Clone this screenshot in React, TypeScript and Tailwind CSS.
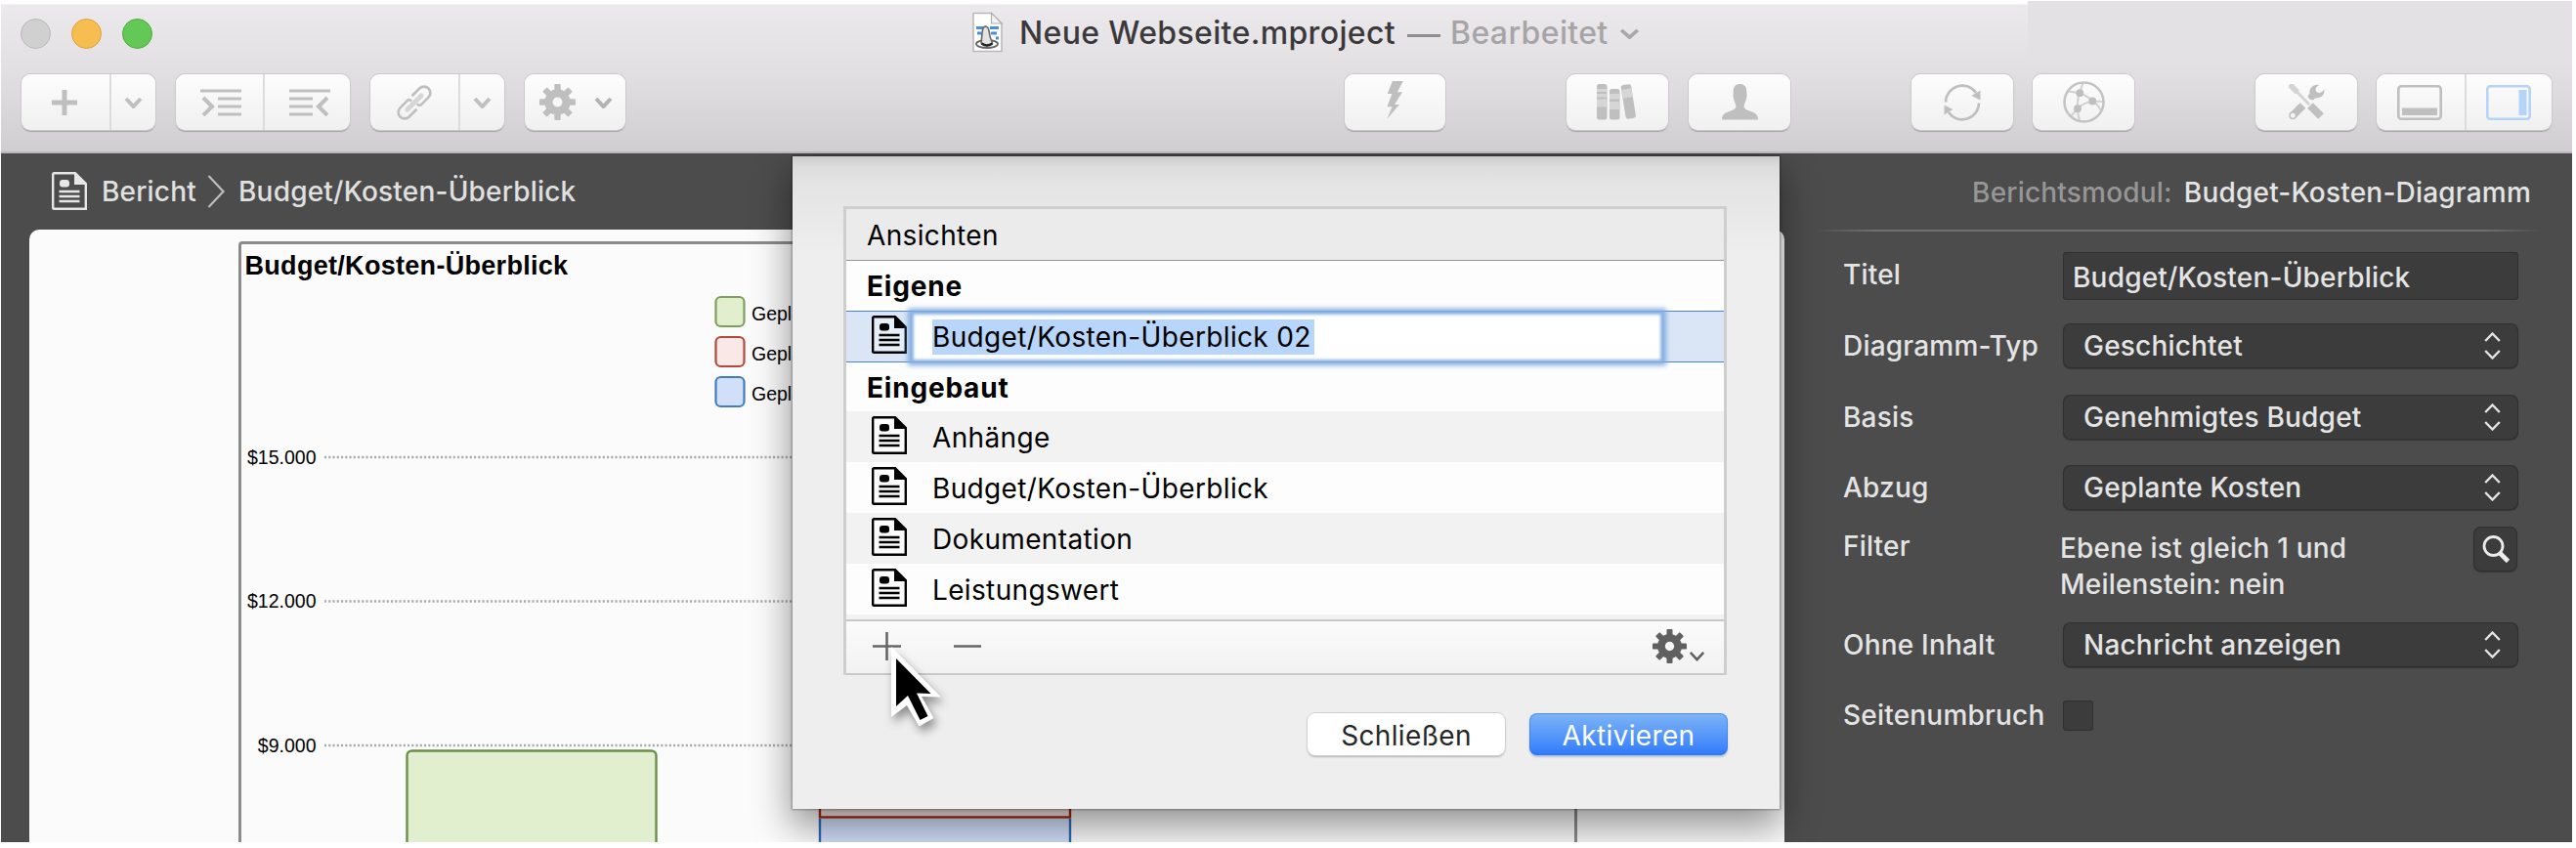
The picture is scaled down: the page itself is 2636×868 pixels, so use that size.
import { ReactNode } from "react";

const VIEWS = ["Anhänge", "Budget/Kosten-Überblick", "Dokumentation", "Leistungswert"];

const GRID_LINES = [
  { label: "$15.000", y: 221 },
  { label: "$12.000", y: 368.5 },
  { label: "$9.000", y: 516 },
];

const LEGEND = [
  { y: 57, stroke: "#7f9f5c", fill: "#e1efce" },
  { y: 98, stroke: "#b3483c", fill: "#fae8e6" },
  { y: 139, stroke: "#3f7dc0", fill: "#d2dff9" },
];

interface ToolButtonProps {
  className?: string;
  children: ReactNode;
}

function ToolGroup({ className = "", children }: ToolButtonProps) {
  return (
    <div
      className={`flex h-[57px] shrink-0 rounded-[9px] bg-gradient-to-b from-[#fdfdfd] to-[#f0f0f0] shadow-[0_0_0_1px_#cbc9cb,0_2px_1px_#a5a3a5] ${className}`}
    >
      {children}
    </div>
  );
}

function Cell({ className = "", children }: ToolButtonProps) {
  return <div className={`flex items-center justify-center ${className}`}>{children}</div>;
}

function Chevron({ color = "#bfbfbf", width = 19, height = 12, stroke = 4 }) {
  return (
    <svg width={width} height={height} viewBox="0 0 19 12" fill="none" preserveAspectRatio="none">
      <path d="M2 2 L9.5 10 L17 2" stroke={color} strokeWidth={stroke} />
    </svg>
  );
}

function Gear({ size, color, hole }: { size: number; color: string; hole: string }) {
  return (
    <svg width={size} height={size} viewBox="-18 -18 36 36">
      {[0, 45, 90, 135].map((a) => (
        <rect key={a} x={-3.1} y={-18} width={6.2} height={36} rx={1} fill={color} transform={`rotate(${a})`} />
      ))}
      <circle r={12.8} fill={color} />
      <circle r={4.8} fill={hole} />
    </svg>
  );
}

function ReportIcon({ color, knock, className = "" }: { color: string; knock: string; className?: string }) {
  return (
    <svg width={36} height={39} viewBox="0 0 36 39" className={`shrink-0 ${className}`}>
      <path d="M2.5 1.2 H24 L34.8 12 V37.8 H2.5 Q1.2 37.8 1.2 36.5 V2.5 Q1.2 1.2 2.5 1.2 Z" fill={knock} stroke={color} strokeWidth={2.4} />
      <path d="M23 0.5 L35.5 13 H23 Z" fill={color} />
      <rect x={8} y={8} width={10} height={7.5} rx={3} fill={color} />
      <path d="M7.5 20 H28.5 M7.5 25 H28.5 M7.5 30 H28.5" stroke={color} strokeWidth={2.3} />
    </svg>
  );
}

function DocumentIcon() {
  return (
    <svg width={34} height={44} viewBox="0 0 34 44">
      <path d="M2 1.5 H20.5 L31 12 V40.5 H2 Z" fill="#fff" stroke="#b8b6b8" strokeWidth={1.5} />
      <path d="M20.5 1.5 V12 H31 Z" fill="#f4f4f4" stroke="#b0b0b0" strokeWidth={1.2} />
      <path d="M5 16.5 H12 M19 16.5 H28 M6 22 H10 M20 22 H26 M25 27 H28" stroke="#4a90d9" strokeWidth={2.8} />
      <ellipse cx={16} cy={33} rx={11} ry={4} fill="#fff" stroke="#666" strokeWidth={1.8} />
      <path d="M10 32 C11 26 10.5 19 12.5 16 C15 14 17.5 16 18 19.5 C18.5 25 20 29 21.5 32 C18 35 13.5 35 10 32 Z" fill="#e4e4e4" stroke="#666" strokeWidth={1.6} />
      <path d="M10.5 32.5 C14 35 18 35 21.5 32.5" fill="none" stroke="#222" strokeWidth={2.4} />
    </svg>
  );
}

function TitleBar() {
  return (
    <div className="flex h-[157px] flex-col border-b-2 border-[#bab8ba] bg-[linear-gradient(#fff_0,#fff_4px,#ebe9eb_5px,#e2e0e2_45%,#d0ced0_100%)]">
      <div className="flex h-[63px] pt-[5px]">
        <div className="flex items-center gap-[21px] pl-[20px]">
          <span className="size-[31px] rounded-full border border-[#b9b9b9] bg-[#d0d0d0]" />
          <span className="size-[31px] rounded-full border border-[#dfa042] bg-[#f6be50]" />
          <span className="size-[31px] rounded-full border border-[#4bab3d] bg-[#64c856]" />
        </div>
        <div className="ml-[838px] flex items-center text-[32px] leading-none font-[450] tracking-[0.35px] whitespace-pre">
          <DocumentIcon />
          <span className="ml-[15px] text-[#3b393b]">Neue Webseite.mproject</span>
          <span className="ml-[12px] h-[3px] w-[34px] translate-y-[2px] bg-[#8f8d8f]" />
          <span className="ml-[10px] text-[#a6a4a6]">Bearbeitet</span>
          <span className="ml-[11px]">
            <Chevron color="#a9a7a9" width={21} height={11} stroke={3.6} />
          </span>
        </div>
        <div className="-mt-[4px] ml-auto h-[66px] w-[557px] bg-[#e3e1e3]" />
      </div>

      <div className="flex pt-[13px] pl-[21px]">
        <ToolGroup className="w-[137px]">
          <Cell className="w-[92px] border-r-2 border-[#dcdcdc] pr-[2px]">
            <svg width={26} height={26} viewBox="0 0 26 26">
              <path d="M13 0 V26 M0 13 H26" stroke="#bfbfbf" strokeWidth={5} />
            </svg>
          </Cell>
          <Cell className="flex-1">
            <Chevron />
          </Cell>
        </ToolGroup>

        <ToolGroup className="ml-[21px] w-[178px]">
          <Cell className="w-[91px] border-r-2 border-[#dcdcdc]">
            <svg width={42} height={28} viewBox="0 0 42 28" fill="none" stroke="#bfbfbf" strokeWidth={2.8} className="ml-[2px]">
              <path d="M0 2 H42 M18 10 H42 M18 18 H42 M18 26 H42" />
              <path d="M3 9 L12 18 L3 27" strokeWidth={4} />
            </svg>
          </Cell>
          <Cell className="flex-1">
            <svg width={42} height={28} viewBox="0 0 42 28" fill="none" stroke="#bfbfbf" strokeWidth={2.8} className="ml-[5px]">
              <path d="M0 2 H42 M0 10 H24 M0 18 H24 M0 26 H24" />
              <path d="M39 9 L30 18 L39 27" strokeWidth={4} />
            </svg>
          </Cell>
        </ToolGroup>

        <ToolGroup className="ml-[21px] w-[137px]">
          <Cell className="w-[92px] border-r-2 border-[#dcdcdc]">
            <svg width={40} height={40} viewBox="-20 -20 40 40" fill="none" strokeWidth={2.6}>
              <g transform="rotate(45)" stroke="#bfbfbf">
                <path d="M-6.5 -3 V-14 A6.5 6.5 0 0 1 6.5 -14 V-3.5 Q6.5 -1 3 -1" />
                <path d="M6.5 3 V14 A6.5 6.5 0 0 1 -6.5 14 V3.5 Q-6.5 1 -3 1" />
                <path d="M0 -10 V10" stroke="#d6d6d6" strokeWidth={5} strokeLinecap="round" />
              </g>
            </svg>
          </Cell>
          <Cell className="flex-1">
            <Chevron />
          </Cell>
        </ToolGroup>

        <ToolGroup className="ml-[21px] w-[103px]">
          <Cell className="w-full gap-[19px] pl-[2px]">
            <Gear size={37} color="#bfbfbf" hole="#f7f7f7" />
            <Chevron color="#b2b2b2" />
          </Cell>
        </ToolGroup>

        <ToolGroup className="ml-[736px] w-[103px]">
          <Cell className="w-full pb-[4px]">
            <svg width={17} height={39} viewBox="0 0 17 39">
              <path d="M5.9 0 H16.8 L10.9 11.3 H16 L8 24 H13 L0.4 38.7 L5.5 26.3 H0.4 L5.5 13 H0.8 Z" fill="#bfbfbf" />
            </svg>
          </Cell>
        </ToolGroup>

        <ToolGroup className="ml-[124px] w-[104px]">
          <Cell className="w-full">
            <svg width={42} height={37} viewBox="0 0 42 37" fill="#bfbfbf">
              <rect width={10.5} height={36.5} rx={2.5} />
              <path d="M0 5 H10.5 V8 H0 Z M0 10 H10.5 V13.5 H0 Z M0 15.5 H10.5 V23.5 H0 Z" fill="#d6d6d6" />
              <rect x={13} y={5} width={10.5} height={31.5} rx={2.5} />
              <path d="M13 10 H23.5 V15.5 H13 Z M13 18 H23.5 V26 H13 Z" fill="#d6d6d6" />
              <g transform="translate(24.4 1.5) rotate(-9)">
                <rect width={10.5} height={35} rx={2.5} />
                <rect y={4.5} width={10.5} height={9} fill="#d6d6d6" />
              </g>
            </svg>
          </Cell>
        </ToolGroup>

        <ToolGroup className="ml-[21px] w-[104px]">
          <Cell className="w-full">
            <svg width={37} height={37} viewBox="0 0 37 37">
              <path
                d="M18.5 0 C23 0 25.5 3 25.3 8 C25.2 9.5 26 11 25.2 14 C24.5 18 23 20 22.6 22 C22.5 25 24 26 28 27.5 C34 29.5 37 31 37 36.5 H0 C0 31 3 29.5 9 27.5 C13 26 14.5 25 14.4 22 C14 20 12.5 18 11.8 14 C11 11 11.8 9.5 11.7 8 C11.5 3 14 0 18.5 0 Z"
                fill="#bfbfbf"
              />
            </svg>
          </Cell>
        </ToolGroup>

        <ToolGroup className="ml-[124px] w-[104px]">
          <Cell className="w-full">
            <svg width={38} height={38} viewBox="-19 -19 38 38" fill="none">
              <path d="M-17 -0.5 A17 17 0 0 1 14 -10 M17 0.5 A17 17 0 0 1 -14 10" stroke="#bfbfbf" strokeWidth={2.6} />
              <path d="M18.5 -12.5 V-2.5 L9.5 -7 Z M-18.5 12.5 V2.5 L-9.5 7 Z" fill="#bfbfbf" />
            </svg>
          </Cell>
        </ToolGroup>

        <ToolGroup className="ml-[20px] w-[104px]">
          <Cell className="w-full">
            <svg width={43} height={43} viewBox="-21.5 -21.5 43 43" fill="none">
              <path
                d="M-4.3 -9.3 L-1 -20 M-4.3 -9.3 L-16 -11 M-4.3 -9.3 C2 -7 5 -5 8.7 -1 M8.7 -1 L20 -0.5 M8.7 -1 Q14 2 17 8 M8.7 -1 Q-1 1 -6.5 6.7 M-4.3 -9.3 Q-7 -2 -6.5 6.7 M-6.5 6.7 L-13 14 M-6.5 6.7 Q-6.5 12 -4.5 19"
                stroke="#d2d2d2"
                strokeWidth={2.2}
              />
              <circle r={20} stroke="#c3c3c3" strokeWidth={2.5} />
              <circle cx={-4.3} cy={-9.3} r={3.9} fill="#bfbfbf" />
              <circle cx={8.7} cy={-1} r={3.9} fill="#bfbfbf" />
              <circle cx={-6.5} cy={6.7} r={3.9} fill="#bfbfbf" />
            </svg>
          </Cell>
        </ToolGroup>

        <ToolGroup className="ml-[124px] w-[104px]">
          <Cell className="w-full">
            <svg width={37} height={37} viewBox="0 0 37 37" fill="none">
              <path d="M5 4.5 L21 21" stroke="#d4d4d4" strokeWidth={3} />
              <path d="M3 2.5 L7.5 7" stroke="#d4d4d4" strokeWidth={6} strokeLinecap="round" />
              <path d="M22 22 L33 33" stroke="#bfbfbf" strokeWidth={8} />
              <path d="M14.5 22 L4.5 32" stroke="#bfbfbf" strokeWidth={8} strokeLinecap="butt" />
              <circle cx={4.3} cy={32.3} r={3.2} fill="#f5f5f5" stroke="#bfbfbf" strokeWidth={1.5} />
              <path
                d="M31 1 C25 0 20.5 4.5 21.5 10 L19.5 12 Q20 16 25 16.5 L27 14.5 C33 15 37 11 36.5 5.5 C34 9 31 10 28.5 8 C26.5 5.5 28 2.5 31 1 Z"
                fill="#bfbfbf"
              />
            </svg>
          </Cell>
        </ToolGroup>

        <ToolGroup className="ml-[20px] w-[179px]">
          <Cell className="w-[92px] border-r-2 border-[#dcdcdc] pr-[2px]">
            <svg width={46} height={36} viewBox="0 0 46 36">
              <rect x={1.3} y={1.3} width={43.4} height={33.4} rx={3} fill="none" stroke="#bfbfbf" strokeWidth={2.6} />
              <rect x={5} y={23.5} width={36} height={7.5} fill="#bfbfbf" />
            </svg>
          </Cell>
          <Cell className="flex-1 pr-[2px]">
            <svg width={46} height={36} viewBox="0 0 46 36">
              <rect x={1.3} y={1.3} width={43.4} height={33.4} rx={3} fill="none" stroke="#b4d4fa" strokeWidth={2.6} />
              <rect x={33.5} y={5} width={8} height={26} fill="#b4d4fa" />
            </svg>
          </Cell>
        </ToolGroup>
      </div>
    </div>
  );
}

function Chart() {
  return (
    <svg width={1370} height={615} viewBox="0 0 1370 615" className="ml-[214px] font-['Liberation_Sans',sans-serif]">
      <path d="M1.5 615 V4 Q1.5 1.5 4 1.5 H1366 Q1368.5 1.5 1368.5 4 V615" fill="none" stroke="#8b8b8b" strokeWidth={3} />
      <text x={6.5} y={34} fontSize={27} fontWeight={700} letterSpacing={0.3}>
        Budget/Kosten-Überblick
      </text>

      {LEGEND.map((item) => (
        <g key={item.y}>
          <rect x={488.5} y={item.y} width={29} height={30} rx={5} fill={item.fill} stroke={item.stroke} strokeWidth={2.2} />
          <text x={525} y={item.y + 24} fontSize={19.5}>
            Geplante
          </text>
        </g>
      ))}

      {GRID_LINES.map((line) => (
        <g key={line.label}>
          <text x={79.5} y={line.y + 6.5} fontSize={19.5} textAnchor="end">
            {line.label}
          </text>
          <line x1={88} x2={1364} y1={line.y} y2={line.y} stroke="#a9a9a9" strokeWidth={2.4} strokeDasharray="2.1 2.15" />
        </g>
      ))}

      <rect x={172.5} y={521.5} width={255} height={110} rx={5} fill="#e1efce" stroke="#6c8f47" strokeWidth={2.4} />
      <rect x={595} y={540} width={256} height={49.5} fill="#fae8e6" stroke="#a12717" strokeWidth={2.4} />
      <path d="M595 591 V640 H851 V591" fill="#d2dff9" stroke="#2c6cb8" strokeWidth={2.4} />
    </svg>
  );
}

function Field({ label, className = "", children }: { label: string; className?: string; children: ReactNode }) {
  return (
    <div className={`flex ${className}`}>
      <div className="w-[225px] shrink-0 leading-[46px] whitespace-nowrap">{label}</div>
      {children}
    </div>
  );
}

function Select({ value }: { value: string }) {
  return (
    <div className="flex h-[46px] w-[466px] items-center justify-between rounded-[8px] bg-[#3c3c3c] pr-[18px] pl-[21px] shadow-[inset_0_0_0_1px_#303030,0_1px_1px_#363636]">
      <span>{value}</span>
      <svg width={17} height={28} viewBox="0 0 17 28" fill="none" stroke="#e4e4e4" strokeWidth={2.4}>
        <path d="M1.2 9 L8.5 1.5 L15.8 9 M1.2 19 L8.5 26.5 L15.8 19" />
      </svg>
    </div>
  );
}

function Inspector() {
  return (
    <div className="w-[806px] shrink-0 text-[28px] leading-none font-[450] tracking-[0.2px] text-[#e4e4e4]">
      <div className="flex h-[78px] items-center justify-end pt-px pr-[42px] whitespace-pre">
        <span className="mr-[12px] text-[#969696]">Berichtsmodul:</span>
        <span className="font-medium">Budget-Kosten-Diagramm</span>
      </div>
      <div className="mr-[30px] ml-[32px] h-[2px] bg-[linear-gradient(90deg,transparent,#707070_8%,#707070_92%,transparent)]" />

      <div className="pl-[60px]">
        <Field label="Titel" className="mt-[21px]">
          <div className="flex h-[49px] w-[466px] items-center rounded-[4px] bg-[#3c3c3c] pt-[3px] pl-[10px] shadow-[inset_0_0_0_1px_#303030]">
            Budget/Kosten-Überblick
          </div>
        </Field>
        <Field label="Diagramm-Typ" className="mt-[24px]">
          <Select value="Geschichtet" />
        </Field>
        <Field label="Basis" className="mt-[27px]">
          <Select value="Genehmigtes Budget" />
        </Field>
        <Field label="Abzug" className="mt-[26px]">
          <Select value="Geplante Kosten" />
        </Field>
        <Field label="Filter" className="mt-[14px] h-[77px]">
          <div className="-ml-[3px] w-[423px] pt-[7px] leading-[36.5px]">
            Ebene ist gleich 1 und
            <br />
            Meilenstein: nein
          </div>
          <div className="mt-[3px] flex h-[46px] w-[45px] items-center justify-center rounded-[8px] bg-[#3c3c3c] shadow-[inset_0_0_0_1px_#303030,0_1px_1px_#363636]">
            <svg width={30} height={30} viewBox="0 0 30 30" fill="none" stroke="#ededed">
              <circle cx={12.5} cy={12} r={9.5} strokeWidth={2.8} />
              <path d="M18.5 18.5 L27.5 27.5" strokeWidth={4.6} />
            </svg>
          </div>
        </Field>
        <Field label="Ohne Inhalt" className="mt-[24px]">
          <Select value="Nachricht anzeigen" />
        </Field>
        <Field label="Seitenumbruch" className="mt-[26px]">
          <div className="mt-[8px] size-[31px] rounded-[4px] bg-[#3c3c3c] shadow-[inset_0_0_0_1px_#303030]" />
        </Field>
      </div>
    </div>
  );
}

function ViewsSheet() {
  return (
    <div className="absolute top-[3px] left-[810px] h-[668px] w-[1010px] bg-[linear-gradient(#cccccc_0,#dcdcdc_10px,#e4e4e4_28px,#eeeeee_100px)] pt-[51px] pr-[54px] pl-[52px] text-[28px] leading-none tracking-[0.35px] text-black shadow-[0_0_2px_1px_rgba(0,0,0,0.3),0_16px_36px_2px_rgba(0,0,0,0.42)]">
      <div className="border-x-3 border-t-3 border-[#cecece]">
        <div className="flex h-[53px] items-center border-b border-[#979797] bg-[#ebebeb] pt-[2px] pl-[21px]">Ansichten</div>
        <div className="flex h-[51px] items-center bg-[#fdfdfd] pt-px pl-[21px] font-bold tracking-[0.8px]">Eigene</div>
        <div className="relative z-10 flex h-[53px] items-center border-y-[1.5px] border-[#4a80dc] bg-[#dae6f6] pl-[26px]">
          <ReportIcon color="#000" knock="#e6eefa" className="-mt-[4px]" />
          <div className="ml-[5px] flex h-[50px] w-[768px] items-center bg-white pl-[21px] shadow-[0_0_5px_4px_#82ade0,inset_0_0_3px_2px_#8fb6e4]">
            <span className="h-[36px] bg-[#b8d5fb] pr-[3px] leading-[37px]">Budget/Kosten-Überblick 02</span>
          </div>
        </div>
        <div className="flex h-[50px] items-center bg-[#fdfdfd] pt-px pl-[21px] font-bold tracking-[0.8px]">Eingebaut</div>
        {VIEWS.map((view, i) => (
          <div key={view} className={`flex h-[52px] items-center pl-[26px] ${i % 2 ? "bg-[#fdfdfd]" : "bg-[#f2f2f2]"}`}>
            <ReportIcon color="#000" knock="#fdfdfd" className="-mt-[3px]" />
            <span className="pt-[2px] pl-[26px]">{view}</span>
          </div>
        ))}
        <div className="h-[5px] bg-[#f2f2f2]" />
        <div className="flex h-[57px] items-center border-y-2 border-[#c8c8c8] bg-gradient-to-b from-[#fbfbfb] to-[#f2f2f2] pl-[27px]">
          <svg width={112} height={29} viewBox="0 0 112 29" stroke="#666" strokeWidth={2.6} className="-mt-[2px]">
            <path d="M0 14.5 H29 M14.5 0 V29 M83 14.5 H111" />
          </svg>
          <div className="-mt-[2px] ml-auto flex items-end gap-[2px] pr-[19px]">
            <Gear size={35} color="#606060" hole="#f7f7f7" />
            <span className="flex h-[13px] items-start">
              <Chevron color="#606060" width={17} height={11} stroke={2.8} />
            </span>
          </div>
        </div>
      </div>

      <div className="mt-[39px] -mr-px flex justify-end gap-[25px]">
        <div className="flex h-[43px] w-[202px] items-center justify-center rounded-[8px] bg-white pt-[2px] text-[#262626] shadow-[0_0_0_1px_#cfcfcf,0_2px_2px_#b5b5b5]">
          Schließen
        </div>
        <div className="flex h-[43px] w-[203px] items-center justify-center rounded-[8px] bg-gradient-to-b from-[#7fb4f5] to-[#2f7afb] pt-[2px] text-white shadow-[inset_0_0_0_1px_rgba(40,110,240,0.5),0_2px_2px_#b5c0d4]">
          Aktivieren
        </div>
      </div>

      {/* Mouse pointer */}
      <svg width={66} height={100} viewBox="0 0 66 100" className="absolute top-[499px] left-[95px] drop-shadow-[3px_6px_5px_rgba(0,0,0,0.4)]">
        <path d="M6 3 L6 75 L22 63 L34.5 84.5 L49.5 76 L37 54 L57 54.5 Z" fill="#fff" />
        <path d="M11 15 L11 64 L23 53 L35.5 78 L43.5 74 L32 50.5 L46.5 51 Z" fill="#000" />
      </svg>
    </div>
  );
}

export default function App() {
  return (
    <div className="h-[868px] w-[2636px] bg-white pl-px font-['Inter',sans-serif]">
      <div className="h-[862px] w-[2631px] overflow-hidden">
        <TitleBar />
        <div className="relative flex h-[705px] overflow-hidden bg-[#4c4c4c]">
          <div className="w-[1825px] shrink-0 pl-[29px]">
            <div className="flex h-[78px] items-center pl-[23px] text-[28px] leading-none font-[450] tracking-[0.2px] text-[#e0e0e0]">
              <ReportIcon color="#e6e6e6" knock="#4c4c4c" className="-mt-[2px]" />
              <span className="ml-[15px]">Bericht</span>
              <svg width={19} height={34} viewBox="0 0 19 34" fill="none" className="ml-[11px]">
                <path d="M1.5 1 L16.5 17 L1.5 33" stroke="#bdbdbd" strokeWidth={2.2} />
              </svg>
              <span className="ml-[13px]">Budget/Kosten-Überblick</span>
            </div>
            <div className="h-[627px] rounded-t-[10px] bg-[#fbfbfb] pt-[12px]">
              <Chart />
            </div>
          </div>
          <Inspector />
          <ViewsSheet />
        </div>
      </div>
    </div>
  );
}
